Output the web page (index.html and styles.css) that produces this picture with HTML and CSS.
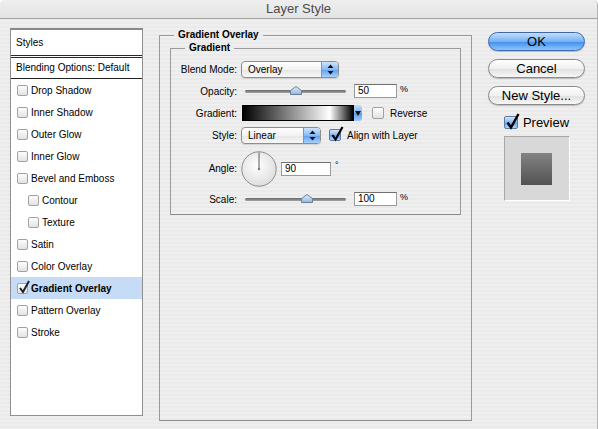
FILE: index.html
```html
<!DOCTYPE html>
<html lang="en">
<head>
    <meta charset="UTF-8">
    <meta name="viewport" content="width=device-width, initial-scale=1.0">
    <title>Layer Style</title>
    <link rel="stylesheet" href="styles.css">
</head>
<body>
    <div class="window">
        <div class="titlebar">Layer Style</div>
        <div class="content">
            <div class="styles-list">
                <div class="list-head">Styles</div>
                <div class="list-blend">Blending Options: Default</div>
                <div class="list-item"><span class="cb"></span>Drop Shadow</div>
                <div class="list-item"><span class="cb"></span>Inner Shadow</div>
                <div class="list-item"><span class="cb"></span>Outer Glow</div>
                <div class="list-item"><span class="cb"></span>Inner Glow</div>
                <div class="list-item"><span class="cb"></span>Bevel and Emboss</div>
                <div class="list-item sub"><span class="cb"></span>Contour</div>
                <div class="list-item sub"><span class="cb"></span>Texture</div>
                <div class="list-item"><span class="cb"></span>Satin</div>
                <div class="list-item"><span class="cb"></span>Color Overlay</div>
                <div class="list-item selected"><span class="cb"><svg class="check" width="12" height="14" viewBox="0 0 12 14"><path d="M2 8 L5 12 L11 1" stroke="#1a2030" stroke-width="2" fill="none"/></svg></span>Gradient Overlay</div>
                <div class="list-item"><span class="cb"></span>Pattern Overlay</div>
                <div class="list-item"><span class="cb"></span>Stroke</div>
            </div>

            <fieldset class="group outer">
                <legend>Gradient Overlay</legend>
                <fieldset class="group inner">
                    <legend>Gradient</legend>
                    <div class="form">
                        <label>Blend Mode:</label>
                        <div class="ctl">
                            <div class="popup blend">
                                <span class="popup-text">Overlay</span>
                                <span class="popup-arrows"><svg width="7" height="11" viewBox="0 0 7 11"><path d="M3.5 0.5 L6.5 4 H0.5 Z M3.5 10.5 L6.5 7 H0.5 Z" fill="#111"/></svg></span>
                            </div>
                        </div>

                        <label>Opacity:</label>
                        <div class="ctl">
                            <div class="slider">
                                <svg class="thumb" style="left: 45px" width="12" height="9" viewBox="0 0 12 9"><defs><linearGradient id="t1" x1="0" y1="0" x2="0" y2="1"><stop offset="0" stop-color="#e6f0fb"/><stop offset="1" stop-color="#8fb4e2"/></linearGradient></defs><path d="M0.5 8.5 V4.5 L6 0.5 L11.5 4.5 V8.5 Z" fill="url(#t1)" stroke="#6d7f99"/></svg>
                            </div>
                            <div class="field">50</div>
                            <span class="unit">%</span>
                        </div>

                        <label>Gradient:</label>
                        <div class="ctl">
                            <div class="swatch"></div>
                            <div class="swatch-tab"><svg width="6" height="5" viewBox="0 0 6 5"><path d="M0 0 H6 L3 5 Z" fill="#111"/></svg></div>
                            <span class="cb plain reverse"></span>
                            <span class="cb-label">Reverse</span>
                        </div>

                        <label>Style:</label>
                        <div class="ctl">
                            <div class="popup style">
                                <span class="popup-text">Linear</span>
                                <span class="popup-arrows"><svg width="7" height="11" viewBox="0 0 7 11"><path d="M3.5 0.5 L6.5 4 H0.5 Z M3.5 10.5 L6.5 7 H0.5 Z" fill="#111"/></svg></span>
                            </div>
                            <span class="acb align"><svg class="check" width="14" height="16" viewBox="0 0 14 16"><path d="M2.5 9 L5.5 13.5 L12.5 1" stroke="#000" stroke-width="2.2" fill="none"/></svg></span>
                            <span class="cb-label">Align with Layer</span>
                        </div>

                        <label>Angle:</label>
                        <div class="ctl">
                            <svg class="dial" width="36" height="36" viewBox="0 0 36 36"><defs><radialGradient id="dg" cx="0.45" cy="0.4" r="0.6"><stop offset="0" stop-color="#ffffff"/><stop offset="1" stop-color="#dedede"/></radialGradient></defs><circle cx="18" cy="18" r="17.2" fill="url(#dg)" stroke="#8c8c8c"/><line x1="18" y1="18" x2="18" y2="1.5" stroke="#5a5a5a"/><circle cx="18" cy="18" r="1.2" fill="#777"/></svg>
                            <div class="field angle">90</div>
                            <span class="unit deg">°</span>
                        </div>

                        <label>Scale:</label>
                        <div class="ctl">
                            <div class="slider">
                                <svg class="thumb" style="left: 56px" width="12" height="9" viewBox="0 0 12 9"><defs><linearGradient id="t2" x1="0" y1="0" x2="0" y2="1"><stop offset="0" stop-color="#e6f0fb"/><stop offset="1" stop-color="#8fb4e2"/></linearGradient></defs><path d="M0.5 8.5 V4.5 L6 0.5 L11.5 4.5 V8.5 Z" fill="url(#t2)" stroke="#6d7f99"/></svg>
                            </div>
                            <div class="field">100</div>
                            <span class="unit">%</span>
                        </div>
                    </div>
                </fieldset>
            </fieldset>

            <div class="side">
                <div class="btn default">OK</div>
                <div class="btn">Cancel</div>
                <div class="btn">New Style...</div>
                <div class="preview-row">
                    <span class="acb big"><svg class="check" width="15" height="17" viewBox="0 0 15 17"><path d="M2.5 9.5 L6 14.5 L13.5 1" stroke="#000" stroke-width="2.4" fill="none"/></svg></span>
                    <span>Preview</span>
                </div>
                <div class="preview-box">
                    <div class="preview-square"></div>
                </div>
            </div>
        </div>
    </div>
</body>
</html>
```

FILE: styles.css
```css
body {
    margin: 0;
    font-family: "Liberation Sans", Arial, sans-serif;
    font-size: 10px;
    color: #000;
}
.window {
    width: 598px;
    height: 429px;
    box-sizing: border-box;
    border-right: 1px solid #b4b4b4;
    border-radius: 5px 5px 0 0;
    overflow: hidden;
    background: repeating-linear-gradient(#efefef 0, #efefef 2px, #eaeaea 2px, #eaeaea 4px);
}
.titlebar {
    height: 18px;
    line-height: 18px;
    border-bottom: 1px solid #a2a2a2;
    text-align: center;
    font-size: 13px;
    color: #4b4b4b;
    background: linear-gradient(#eeeeee, #e4e4e4);
}
.content {
    display: flex;
    align-items: flex-start;
    padding: 9px 0 0 10px;
}

/* styles list */
.styles-list {
    width: 133px;
    height: 388px;
    box-sizing: border-box;
    background: #fff;
    border: 1px solid #8f8f8f;
    border-top: 2px solid #888;
}
.list-head {
    height: 25px;
    line-height: 25px;
    padding-left: 5px;
    border-bottom: 3px double #2a2a2a;
}
.list-blend {
    height: 20px;
    line-height: 20px;
    padding-left: 5px;
    border-bottom: 1px solid #222;
}
.list-item {
    height: 22px;
    display: flex;
    align-items: center;
    gap: 3px;
    padding-left: 6px;
}
.list-item.sub {
    padding-left: 17px;
}
.list-item.selected {
    background: #c6dbf5;
    font-weight: bold;
}
.cb {
    position: relative;
    width: 11px;
    height: 11px;
    box-sizing: border-box;
    border: 1px solid #a2a2a2;
    border-radius: 2px;
    background: linear-gradient(#fdfdfd, #e2e2e2);
    flex-shrink: 0;
}
.cb .check {
    position: absolute;
    left: 0;
    top: -4px;
    overflow: visible;
}

/* group boxes */
.group {
    margin: 0;
    padding: 0;
    border: 1px solid #9a9a9a;
    border-bottom-color: #8a8a8a;
}
.group legend {
    margin-left: 14px;
    padding: 0 4px;
    font-weight: bold;
    line-height: 12px;
}
.outer {
    width: 313px;
    height: 392px;
    box-sizing: border-box;
    margin-left: 16px;
    margin-top: 1px;
    padding-top: 1px;
}
.inner {
    margin-left: 10px;
    width: 291px;
    box-sizing: border-box;
}
.form {
    display: grid;
    grid-template-columns: 66px auto;
    grid-template-rows: 22px 22px 22px 22px 45px 16px;
    column-gap: 4px;
    align-items: center;
    padding: 4px 0 7px;
}
.form label {
    text-align: right;
}
.ctl {
    display: flex;
    align-items: center;
}

.popup {
    height: 17px;
    box-sizing: border-box;
    display: flex;
    border: 1px solid #8d8d8d;
    border-radius: 4px;
    overflow: hidden;
    background: linear-gradient(#ffffff, #f2f2f2 50%, #e6e6e6 51%, #f8f8f8);
    box-shadow: 0 1px 1px rgba(0, 0, 0, 0.12);
}
.popup.blend {
    width: 98px;
}
.popup.style {
    width: 80px;
}
.popup-text {
    flex: 1;
    padding-left: 6px;
    line-height: 15px;
}
.popup-arrows {
    width: 16px;
    display: flex;
    align-items: center;
    justify-content: center;
    border-left: 1px solid #7f95b8;
    background: linear-gradient(#cfe4fc, #86b9f3 50%, #5d9ef0 51%, #a6d1fb);
}

.slider {
    position: relative;
    width: 101px;
    height: 3px;
    margin-left: 4px;
    border-radius: 2px;
    background: linear-gradient(#666, #a4a4a4);
}
.thumb {
    position: absolute;
    top: -4px;
}

.field {
    width: 43px;
    height: 14px;
    box-sizing: border-box;
    margin-left: 8px;
    padding-left: 3px;
    line-height: 12px;
    background: #fff;
    border: 1px solid #9a9a9a;
    border-top-color: #707070;
}
.field.angle {
    width: 50px;
    margin-left: 4px;
}
.unit {
    margin-left: 3px;
    margin-bottom: 5px;
    font-size: 9px;
}
.unit.deg {
    margin-left: 4px;
    margin-bottom: 8px;
}

.swatch {
    width: 112px;
    height: 16px;
    box-sizing: border-box;
    margin-left: 1px;
    border: 1px solid #000;
    background: linear-gradient(90deg, #000, #fff 79%, #000);
}
.swatch-tab {
    width: 8px;
    height: 16px;
    display: flex;
    align-items: center;
    justify-content: center;
    background: linear-gradient(#c4defb, #7fb4f2 50%, #5a9bef 51%, #9ccbfa);
    border-radius: 0 3px 3px 0;
}
.cb.plain {
    width: 12px;
    height: 12px;
}
.reverse {
    margin-left: 10px;
}
.cb-label {
    margin-left: 6px;
}
.acb {
    position: relative;
    width: 12px;
    height: 12px;
    box-sizing: border-box;
    border: 1px solid #5a79a5;
    border-radius: 2px;
    background: linear-gradient(#d2e6fc, #84b7f1 50%, #5f9deb 51%, #acd4fb);
    flex-shrink: 0;
}
.acb .check {
    position: absolute;
    left: 0;
    top: -4px;
    overflow: visible;
}
.align {
    margin-left: 8px;
}
.dial {
    display: block;
}

/* buttons and preview */
.side {
    width: 97px;
    margin-left: 16px;
    padding-top: 4px;
    display: flex;
    flex-direction: column;
    align-items: center;
    font-size: 13px;
}
.btn {
    width: 97px;
    height: 19px;
    box-sizing: border-box;
    margin-bottom: 8px;
    line-height: 17px;
    text-align: center;
    border: 1px solid #8a8a8a;
    border-radius: 10px;
    background: linear-gradient(#ffffff, #f0f0f0 50%, #e0e0e0 51%, #f7f7f7);
    box-shadow: 0 1px 1px rgba(0, 0, 0, 0.2);
}
.btn.default {
    border-color: #3c68ad;
    background: linear-gradient(#c4e0fc, #76b0f3 50%, #3f8deb 51%, #8cc6fb);
}
.preview-row {
    display: flex;
    align-items: center;
    gap: 5px;
    margin-top: 2px;
    height: 14px;
}
.acb.big {
    width: 14px;
    height: 13px;
}
.preview-box {
    width: 66px;
    height: 65px;
    box-sizing: border-box;
    margin-top: 7px;
    display: flex;
    align-items: center;
    justify-content: center;
    background: #d8d8d8;
    border: 1px solid #fff;
    border-top-color: #a8a8a8;
    border-left-color: #a8a8a8;
}
.preview-square {
    width: 31px;
    height: 32px;
    background: linear-gradient(#838383, #525252);
}
```
